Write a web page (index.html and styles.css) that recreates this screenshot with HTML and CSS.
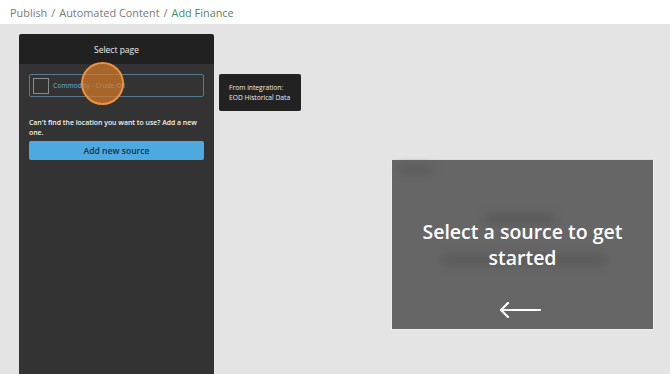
FILE: index.html
```html
<!DOCTYPE html>
<html lang="en">
<head>
    <meta charset="UTF-8">
    <meta name="viewport" content="width=device-width, initial-scale=1.0">
    <title>Add Finance</title>
    <link rel="stylesheet" href="styles.css">
</head>
<body>

<div class="topbar">
    <span class="crumb">Publish</span>
    <span class="sep">/</span>
    <span class="crumb">Automated Content</span>
    <span class="sep">/</span>
    <span class="crumb current">Add Finance</span>
</div>

<div class="main">
    <div class="sidebar">
        <div class="sidebar-head">Select page</div>
        <div class="sidebar-body">
            <div class="item">
                <span class="check"></span>
                <span class="item-name">Commodity - Crude Oil</span>
                <span class="pulse"></span>
                <div class="tooltip">From integration:<br>EOD Historical Data</div>
            </div>
            <p class="hint">Can't find the location you want to use? Add a new one.</p>
            <button class="btn">Add new source</button>
        </div>
    </div>

    <div class="preview">
        <!-- blurred placeholder of the widget behind the overlay -->
        <div class="ghost ghost-title"></div>
        <div class="ghost ghost-a"></div>
        <div class="ghost ghost-b"></div>
        <div class="preview-text">Select a source to get started</div>
        <svg class="arrow" width="44" height="16" viewBox="0 0 44 16">
            <path d="M42 8 H3 M10 1 L3 8 L10 15" fill="none" stroke="#fff" stroke-width="2.2" stroke-linecap="round" stroke-linejoin="round"/>
        </svg>
    </div>
</div>

</body>
</html>
```

FILE: styles.css
```css
body {
    margin: 0;
    padding: 0;
    font-family: "Open Sans", Arial, sans-serif;
    background-color: #e4e4e4;
    height: 374px;
    overflow: hidden;
}
.topbar {
    height: 24px;
    background-color: #fff;
    display: flex;
    align-items: center;
    gap: 4px;
    padding-left: 10px;
    font-size: 10.9px;
    color: #7a7a7a;
}
.crumb.current {
    color: #4c8a63;
}
.main {
    display: flex;
    align-items: flex-start;
    padding: 10px 0 0 19px;
}
.sidebar {
    width: 195px;
    height: 340px;
    background-color: #333;
    border-radius: 3px 3px 0 0;
}
.sidebar-head {
    height: 30px;
    background-color: #212121;
    border-radius: 3px 3px 0 0;
    color: #eee;
    font-size: 8.5px;
    display: flex;
    align-items: center;
    justify-content: center;
}
.sidebar-body {
    padding: 10px;
}
.item {
    position: relative;
    height: 21px;
    border: 1px solid #587a90;
    border-radius: 2px;
    display: flex;
    align-items: center;
    padding-left: 3px;
    gap: 4px;
}
.check {
    width: 14px;
    height: 14px;
    border: 1px solid #8a8a8a;
    background-color: #333;
}
.item-name {
    font-size: 6.6px;
    color: #5b97bd;
    font-weight: 600;
}
.pulse {
    position: absolute;
    left: 51px;
    top: -13px;
    width: 39px;
    height: 39px;
    border-radius: 50%;
    border: 2px solid #f0913d;
    background-color: rgba(214, 120, 40, 0.72);
}
.tooltip {
    position: absolute;
    left: 189px;
    top: -1px;
    width: 62px;
    height: 27px;
    padding: 5px 10px;
    background-color: #222;
    border-radius: 2px;
    color: #eee;
    font-size: 6.7px;
    line-height: 10px;
    display: flex;
    align-items: center;
}
.hint {
    margin: 21px 0 3px;
    color: #f2f2f2;
    font-size: 6.9px;
    font-weight: 600;
    line-height: 10px;
}
.btn {
    display: block;
    width: 100%;
    height: 19px;
    border: none;
    border-radius: 2px;
    background-color: #4da9df;
    color: #163248;
    font-family: "Open Sans", Arial, sans-serif;
    font-size: 8.6px;
    font-weight: 600;
    padding: 0;
}
.preview {
    position: relative;
    margin: 125px 0 0 177px;
    width: 261px;
    height: 169px;
    background-color: #666;
    border: 1px solid #eee;
    border-top-color: #ddd;
    display: flex;
    flex-direction: column;
    align-items: center;
}
.ghost {
    position: absolute;
    background-color: #5a5a5a;
    filter: blur(4px);
    border-radius: 4px;
}
.ghost-title {
    left: 6px;
    top: 6px;
    width: 34px;
    height: 7px;
}
.ghost-a {
    left: 92px;
    top: 54px;
    width: 72px;
    height: 10px;
}
.ghost-b {
    left: 50px;
    top: 95px;
    width: 164px;
    height: 10px;
}
.preview-text {
    position: relative;
    margin-top: 59px;
    width: 210px;
    text-align: center;
    color: #fff;
    font-size: 19.5px;
    font-weight: 600;
    line-height: 26px;
}
.arrow {
    margin-top: 31px;
    margin-right: 6px;
}
```
